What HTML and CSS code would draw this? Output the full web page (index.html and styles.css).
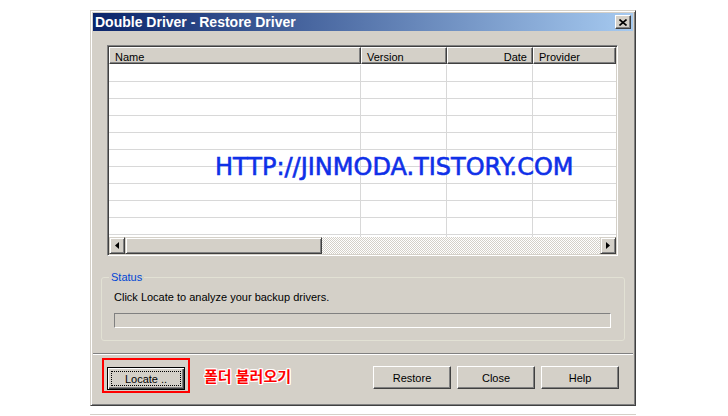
FILE: index.html
```html
<!DOCTYPE html>
<html lang="ko">
<head>
    <meta charset="UTF-8">
    <title>Double Driver - Restore Driver</title>
    <link rel="stylesheet" href="styles.css">
</head>
<body>
    <div class="window">
        <div class="titlebar">
            <span class="title">Double Driver - Restore Driver</span>
            <span class="close-btn">
                <svg width="8" height="7" viewBox="0 0 8 7"><path d="M0.5 0.5L7.5 6.5M7.5 0.5L0.5 6.5" stroke="#000" stroke-width="1.6"/></svg>
            </span>
        </div>

        <div class="listview">
            <div class="lv-header">
                <div class="col c-name">Name</div>
                <div class="col c-version">Version</div>
                <div class="col c-date">Date</div>
                <div class="col c-provider">Provider</div>
            </div>
            <div class="lv-rows">
                <div class="row"><div class="c-name"></div><div class="c-version"></div><div class="c-date"></div><div class="c-provider"></div></div>
                <div class="row"><div class="c-name"></div><div class="c-version"></div><div class="c-date"></div><div class="c-provider"></div></div>
                <div class="row"><div class="c-name"></div><div class="c-version"></div><div class="c-date"></div><div class="c-provider"></div></div>
                <div class="row"><div class="c-name"></div><div class="c-version"></div><div class="c-date"></div><div class="c-provider"></div></div>
                <div class="row"><div class="c-name"></div><div class="c-version"></div><div class="c-date"></div><div class="c-provider"></div></div>
                <div class="row"><div class="c-name"></div><div class="c-version"></div><div class="c-date"></div><div class="c-provider"></div></div>
                <div class="row"><div class="c-name"></div><div class="c-version"></div><div class="c-date"></div><div class="c-provider"></div></div>
                <div class="row"><div class="c-name"></div><div class="c-version"></div><div class="c-date"></div><div class="c-provider"></div></div>
                <div class="row"><div class="c-name"></div><div class="c-version"></div><div class="c-date"></div><div class="c-provider"></div></div>
                <div class="row"><div class="c-name"></div><div class="c-version"></div><div class="c-date"></div><div class="c-provider"></div></div>
                <div class="row"><div class="c-name"></div><div class="c-version"></div><div class="c-date"></div><div class="c-provider"></div></div>
            </div>
            <div class="hscroll">
                <div class="sb-btn">
                    <svg width="4" height="7" viewBox="0 0 4 7"><path d="M4 0L0 3.5L4 7Z" fill="#000"/></svg>
                </div>
                <div class="sb-thumb"></div>
                <div class="sb-track"></div>
                <div class="sb-btn">
                    <svg width="4" height="7" viewBox="0 0 4 7"><path d="M0 0L4 3.5L0 7Z" fill="#000"/></svg>
                </div>
            </div>
            <div class="watermark">HTTP://JINMODA.TISTORY.COM</div>
        </div>

        <fieldset class="status">
            <legend>Status</legend>
            <p class="status-text">Click Locate to analyze your backup drivers.</p>
            <div class="progress"></div>
        </fieldset>

        <div class="separator"></div>

        <div class="button-row">
            <div class="highlight">
                <button class="btn btn-default"><span class="focus">Locate ..</span></button>
            </div>
            <span class="note">폴더 불러오기</span>
            <div class="right-buttons">
                <button class="btn">Restore</button>
                <button class="btn">Close</button>
                <button class="btn">Help</button>
            </div>
        </div>
    </div>
    <div class="page-rule"></div>
</body>
</html>
```

FILE: styles.css
```css
body {
    margin: 0;
    width: 728px;
    height: 416px;
    overflow: hidden;
    background: #fff;
    font-family: "Liberation Sans", Arial, sans-serif;
    font-size: 11px;
    color: #000;
}
.window {
    box-sizing: border-box;
    width: 546px;
    height: 396px;
    margin: 10px 0 0 90px;
    padding: 2px;
    display: flex;
    flex-direction: column;
    background: #d4d0c8;
    border: 1px solid;
    border-color: #d4d0c8 #404040 #404040 #d4d0c8;
    box-shadow: inset 1px 1px #fff, inset -1px -1px #808080;
}
.titlebar {
    height: 18px;
    flex: none;
    display: flex;
    align-items: center;
    justify-content: space-between;
    padding: 0 2px;
    background: linear-gradient(to right, #0a246a, #a6caf0);
}
.title {
    color: #fff;
    font-weight: bold;
    font-size: 14px;
    line-height: 16px;
}
.close-btn {
    box-sizing: border-box;
    width: 16px;
    height: 14px;
    display: flex;
    align-items: center;
    justify-content: center;
    background: #d4d0c8;
    border: 1px solid;
    border-color: #fff #404040 #404040 #fff;
    box-shadow: inset -1px -1px #808080;
}

/* list view */
.listview {
    position: relative;
    box-sizing: border-box;
    width: 511px;
    height: 211px;
    margin: 14px 0 0 14px;
    padding: 1px;
    display: flex;
    flex-direction: column;
    border: 1px solid;
    border-color: #808080 #fff #fff #808080;
    box-shadow: inset 1px 1px #404040, inset -1px -1px #d4d0c8;
    overflow: hidden;
}
.lv-header {
    display: flex;
    height: 17px;
    flex: none;
}
.lv-header .col {
    box-sizing: border-box;
    height: 17px;
    padding: 2px 5px 0;
    line-height: 14px;
    background: #d4d0c8;
    border: 1px solid;
    border-color: #fff #404040 #404040 #fff;
    box-shadow: inset -1px -1px #808080;
    white-space: nowrap;
}
.c-name { width: 252px; flex: none; }
.c-version { width: 86px; flex: none; }
.c-date { width: 86px; flex: none; }
.c-provider { flex: 1; }
.lv-header .c-date { text-align: right; }
.lv-rows {
    flex: 1;
    overflow: hidden;
    padding-top: 1px;
    background: #fff;
}
.row {
    display: flex;
    box-sizing: border-box;
    height: 17px;
    border-bottom: 1px solid #d8d8d8;
}
.row div {
    box-sizing: border-box;
    border-right: 1px solid #d8d8d8;
}
.row .c-provider { border-right: none; }
.hscroll {
    display: flex;
    height: 17px;
    flex: none;
}
.sb-btn,
.sb-thumb {
    box-sizing: border-box;
    height: 17px;
    background: #d4d0c8;
    border: 1px solid;
    border-color: #d4d0c8 #404040 #404040 #d4d0c8;
    box-shadow: inset 1px 1px #fff, inset -1px -1px #808080;
}
.sb-btn {
    width: 16px;
    display: flex;
    align-items: center;
    justify-content: center;
}
.sb-thumb { width: 197px; }
.sb-track {
    flex: 1;
    background: repeating-conic-gradient(#d4d0c8 0 25%, #fff 0 50%) 0 0 / 2px 2px;
}
.watermark {
    position: absolute;
    left: 107px;
    top: 109px;
    font-family: "DejaVu Sans", Verdana, sans-serif;
    font-size: 24px;
    line-height: 24px;
    color: #0f30e8;
    -webkit-text-stroke: 0.6px #0f30e8;
    white-space: nowrap;
}

/* status group */
.status {
    box-sizing: border-box;
    width: 524px;
    margin: 15px 0 0 8px;
    padding: 0 12px 12px;
    min-width: 0;
    border: 1px solid #e2e1d4;
    border-radius: 3px;
}
.status legend {
    padding: 0 2px;
    margin-left: -5px;
    line-height: 13px;
    color: #0046d5;
}
.status-text {
    margin: 0;
    padding-top: 7px;
    line-height: 13px;
}
.progress {
    box-sizing: border-box;
    width: 497px;
    height: 15px;
    margin-top: 9px;
    border: 1px solid;
    border-color: #808080 #fff #fff #808080;
}
.separator {
    flex: none;
    margin-top: 12px;
    border-top: 1px solid #808080;
    border-bottom: 1px solid #fff;
}

/* buttons */
.button-row {
    display: flex;
    align-items: flex-start;
}
.highlight {
    margin: 3px 0 0 9px;
    padding: 7px 3px 1px;
    border: 2px solid #ff0000;
}
.btn {
    box-sizing: border-box;
    width: 78px;
    height: 23px;
    margin: 0;
    padding: 0;
    font-family: "Liberation Sans", Arial, sans-serif;
    font-size: 11px;
    color: #000;
    background: #d4d0c8;
    border: 1px solid;
    border-color: #fff #404040 #404040 #fff;
    box-shadow: inset -1px -1px #808080;
}
.btn-default {
    display: flex;
    padding: 3px;
    border-color: #000;
    box-shadow: inset 1px 1px #fff, inset -1px -1px #404040, inset -2px -2px #808080;
}
.focus {
    flex: 1;
    display: flex;
    align-items: center;
    justify-content: center;
    border: 1px dotted #000;
}
.note {
    margin: 12px 0 0 14px;
    font-family: "Noto Sans CJK KR", sans-serif;
    font-weight: bold;
    font-size: 15px;
    line-height: 18px;
    color: #ff0000;
    text-shadow: 1px 0 #fff, -1px 0 #fff, 0 1px #fff, 0 -1px #fff, 1px 1px #fff, -1px -1px #fff, 1px -1px #fff, -1px 1px #fff;
}
.right-buttons {
    display: flex;
    gap: 6px;
    margin: 11px 14px 0 auto;
}
.page-rule {
    width: 546px;
    height: 1px;
    margin: 8px 0 0 90px;
    background: #d4d0c8;
}
```
